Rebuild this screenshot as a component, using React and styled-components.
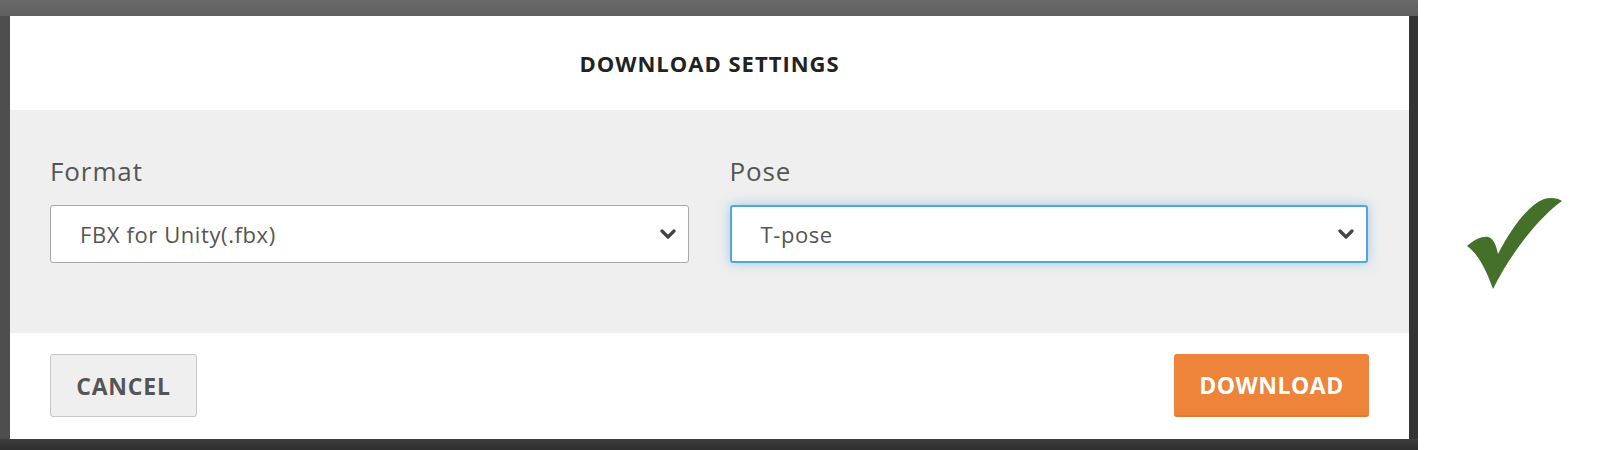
import React from "react";
import styled, { createGlobalStyle } from "styled-components";

const Global = createGlobalStyle`
  html, body { margin: 0; padding: 0; background: #ffffff; }
  body { font-family: "Open Sans", "Noto Sans", sans-serif; }
  * { box-sizing: border-box; }
`;

const Page = styled.div`
  width: 1600px;
  height: 450px;
  display: flex;
  background: #ffffff;
`;

const Backdrop = styled.div`
  width: 1418px;
  height: 450px;
  padding: 16px 9px 11px 10px;
  display: flex;
  background:
    linear-gradient(180deg, #6a6a6a, #5e5e5e) top left / 100% 16px no-repeat,
    linear-gradient(180deg, #3e3e3e, #2e2e2e) bottom left / 100% 11px no-repeat,
    linear-gradient(90deg, #4e4e4e 0 10px, #3a3a3a 10px calc(100% - 9px), #333333 calc(100% - 9px));
`;

const Modal = styled.div`
  flex: 1;
  display: flex;
  flex-direction: column;
  background: #ffffff;
`;

const Header = styled.div`
  height: 94px;
  display: flex;
  align-items: center;
  justify-content: center;
`;

const Title = styled.h2`
  margin: 0;
  font-size: 22px;
  font-weight: 700;
  color: #222222;
  letter-spacing: 1px;
`;

const Body = styled.div`
  height: 223px;
  background: #efefef;
  padding: 46px 41px 0 40px;
  display: grid;
  grid-template-columns: 1fr 1fr;
  column-gap: 41px;
  align-content: start;
`;

const Field = styled.div`
  display: flex;
  flex-direction: column;
`;

const Label = styled.label`
  font-size: 26px;
  line-height: 30px;
  letter-spacing: 0.9px;
  color: #555555;
  margin-bottom: 19px;
`;

const Select = styled.div`
  height: 58px;
  background: #ffffff;
  border: ${(p) => (p.$focused ? "2px solid #52a7d6" : "1.5px solid #a9a9a9")};
  border-radius: 3px;
  box-shadow: ${(p) => (p.$focused ? "0 0 12px rgba(82, 168, 220, 0.5)" : "none")};
  display: flex;
  align-items: center;
  justify-content: space-between;
  padding: 0 12px 0 29px;
`;

const SelectText = styled.span`
  font-size: 22px;
  letter-spacing: 0.6px;
  color: #555555;
`;

const Chevron = () => (
  <svg width="16" height="11" viewBox="0 0 16 11">
    <path d="M2 2 L8 8 L14 2" fill="none" stroke="#444444" strokeWidth="3.2" strokeLinecap="round" strokeLinejoin="round" />
  </svg>
);

const Footer = styled.div`
  flex: 1;
  padding: 21px 40px 0 40px;
  display: flex;
  justify-content: space-between;
  align-items: flex-start;
`;

const Button = styled.button`
  height: 63px;
  width: ${(p) => p.$width}px;
  border-radius: 3px;
  font-family: "Open Sans", "Noto Sans", sans-serif;
  font-size: 23px;
  font-weight: 700;
  letter-spacing: ${(p) => (p.$primary ? "0.5px" : "0.8px")};
  cursor: pointer;
  background: ${(p) => (p.$primary ? "#ed843a" : "#efefef")};
  color: ${(p) => (p.$primary ? "#ffffff" : "#555555")};
  border: ${(p) => (p.$primary ? "none" : "1.5px solid #c6c6c6")};
  border-bottom: ${(p) => (p.$primary ? "2px solid #e27a2f" : "1.5px solid #c6c6c6")};
`;

const Side = styled.div`
  flex: 1;
  display: flex;
  align-items: flex-start;
  padding: 194px 0 0 43px;
`;

const Check = () => (
  <svg width="105" height="100" viewBox="0 0 105 100">
    <path
      d="M6 52 C14 45 22 42 27 43 C32 44 35 50 37 60 C50 35 66 12 83 5 C90 3 97 4 101 7 C80 22 52 55 32 95 C25 75 17 60 6 52 Z"
      fill="#44702a"
    />
  </svg>
);

export default function App() {
  return (
    <Page>
      <Global />
      <Backdrop>
        <Modal>
          <Header>
            <Title>DOWNLOAD SETTINGS</Title>
          </Header>
          <Body>
            <Field>
              <Label>Format</Label>
              <Select>
                <SelectText>FBX for Unity(.fbx)</SelectText>
                <Chevron />
              </Select>
            </Field>
            <Field>
              <Label>Pose</Label>
              <Select $focused>
                <SelectText>T-pose</SelectText>
                <Chevron />
              </Select>
            </Field>
          </Body>
          <Footer>
            <Button $width={147}>CANCEL</Button>
            <Button $primary $width={195}>DOWNLOAD</Button>
          </Footer>
        </Modal>
      </Backdrop>
      <Side>
        <Check />
      </Side>
    </Page>
  );
}
